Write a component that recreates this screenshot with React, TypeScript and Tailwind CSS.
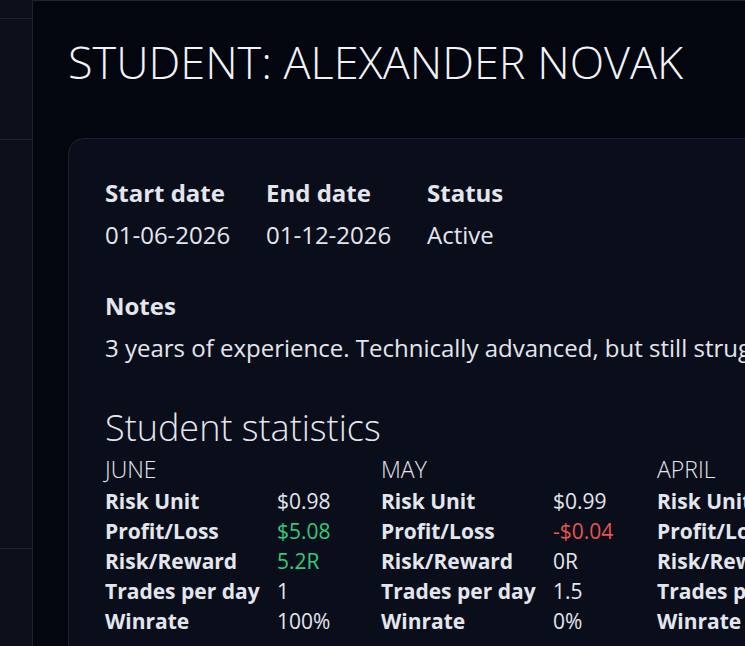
import React from "react";

const months = [
  {
    name: "June",
    riskUnit: "$0.98",
    pnl: "$5.08",
    pnlTone: "pos",
    rr: "5.2R",
    rrTone: "pos",
    trades: "1",
    winrate: "100%",
  },
  {
    name: "May",
    riskUnit: "$0.99",
    pnl: "-$0.04",
    pnlTone: "neg",
    rr: "0R",
    rrTone: "none",
    trades: "1.5",
    winrate: "0%",
  },
  {
    name: "April",
    riskUnit: "$1.02",
    pnl: "$2.40",
    pnlTone: "pos",
    rr: "2.4R",
    rrTone: "pos",
    trades: "2",
    winrate: "50%",
  },
];

const toneClass = (tone: string) =>
  tone === "pos" ? "text-[#2fcb7c]" : tone === "neg" ? "text-[#e5564e]" : "text-[#e4e6ee]";

const App = () => {
  return (
    <div
      className="flex h-[646px] w-full overflow-hidden bg-[#03060f] text-[#e4e6ee]"
      style={{ fontFamily: '"Open Sans", "Noto Sans", sans-serif' }}
    >
      {/* Sidebar */}
      <aside className="flex w-[33px] shrink-0 flex-col border-r border-[#1c2230] bg-[#0a0f1a]">
        <div className="h-[19px] border-b border-[#1c2230]" />
        <div className="h-[121px] border-b border-[#1c2230]" />
        <div className="h-[409px] border-b border-[#1c2230]" />
        <div className="flex-1" />
      </aside>

      {/* Main */}
      <main className="min-w-0 flex-1 border-t border-[#1c2230] pl-[35px] pt-[31px]">
        <h1 className="whitespace-nowrap text-[45px] font-light leading-[60px] text-[#f1f3f7]">
          STUDENT: ALEXANDER NOVAK
        </h1>

        <section className="mt-[46px] w-[1100px] rounded-2xl border border-[#1d2232] bg-[#0a0e1a] px-9 pb-9 pt-[33px]">
          {/* Dates */}
          <div className="flex">
            {[
              ["Start date", "01-06-2026"],
              ["End date", "01-12-2026"],
              ["Status", "Active"],
            ].map(([label, value]) => (
              <div key={label} className="w-[161px]">
                <div className="text-[24px] font-bold leading-[42px]">{label}</div>
                <div className="text-[24px] leading-[42px]">{value}</div>
              </div>
            ))}
          </div>

          {/* Notes */}
          <div className="mt-[29px]">
            <div className="text-[24px] font-bold leading-[42px]">Notes</div>
            <div className="whitespace-nowrap text-[24px] leading-[42px]">
              3 years of experience. Technically advanced, but still struggling with discipline and overtrading.
            </div>
          </div>

          {/* Statistics */}
          <h2 className="mt-[35px] text-[36px] font-light leading-[48px]">Student statistics</h2>
          <div className="mt-[1px] flex">
            {months.map((m) => (
              <div key={m.name} className="w-[276px] shrink-0">
                <div className="text-[23px] font-light uppercase leading-[33px]">{m.name}</div>
                <div className="grid grid-cols-[172px_1fr] text-[21px] leading-[30px]">
                  <span className="font-bold">Risk Unit</span>
                  <span>{m.riskUnit}</span>
                  <span className="font-bold">Profit/Loss</span>
                  <span className={toneClass(m.pnlTone)}>{m.pnl}</span>
                  <span className="font-bold">Risk/Reward</span>
                  <span className={toneClass(m.rrTone)}>{m.rr}</span>
                  <span className="whitespace-nowrap font-bold">Trades per day</span>
                  <span>{m.trades}</span>
                  <span className="font-bold">Winrate</span>
                  <span>{m.winrate}</span>
                </div>
              </div>
            ))}
          </div>
        </section>
      </main>
    </div>
  );
};

export default App;
